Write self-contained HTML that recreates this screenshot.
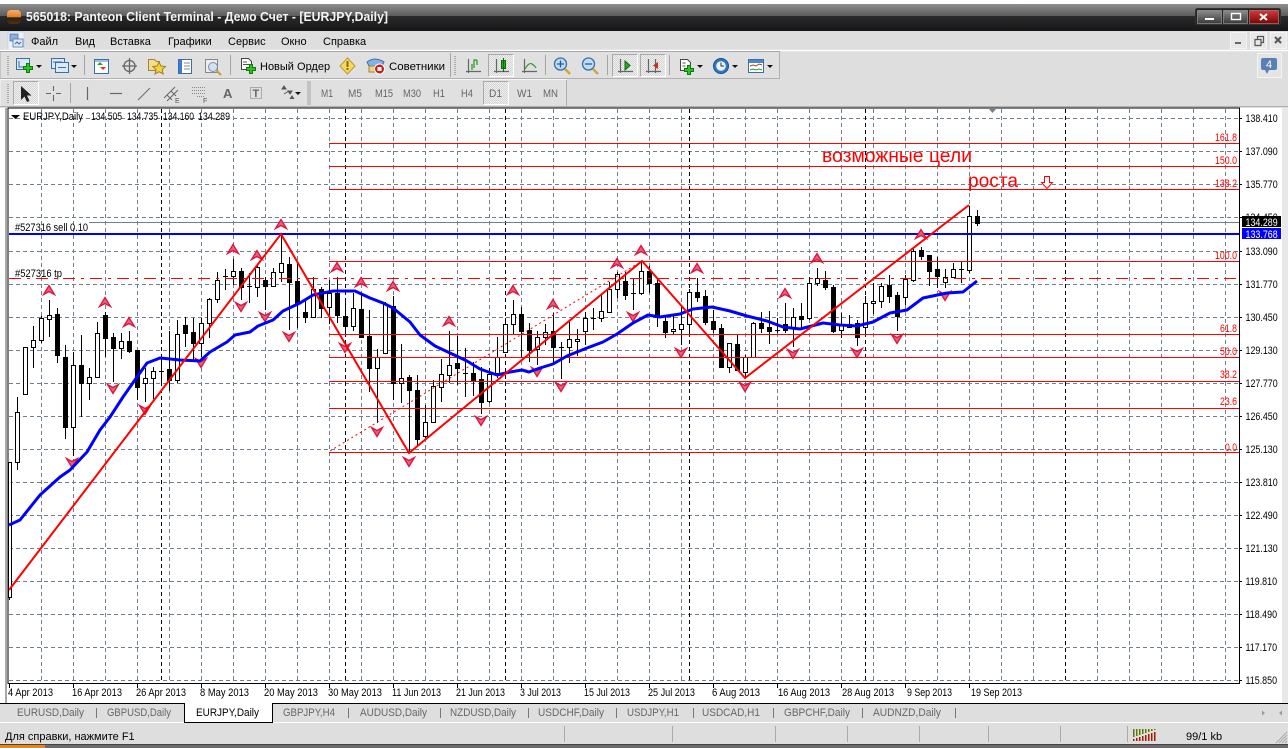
<!DOCTYPE html>
<html><head><meta charset="utf-8"><title>Panteon Client Terminal</title>
<style>html,body{margin:0;padding:0;background:#fff;width:1288px;height:748px;overflow:hidden}svg{display:block}text{font-family:"Liberation Sans","Noto Sans CJK SC",sans-serif;font-size:11px;fill:#000}</style></head><body>
<svg width="1288" height="748" viewBox="0 0 1288 748" xmlns="http://www.w3.org/2000/svg">
<defs>
<linearGradient id="tg" x1="0" y1="0" x2="0" y2="1"><stop offset="0" stop-color="#8e8e8e"/><stop offset="1" stop-color="#5c5c5c"/></linearGradient>
<linearGradient id="tb" x1="0" y1="0" x2="0" y2="1"><stop offset="0" stop-color="#2b2b2d"/><stop offset="1" stop-color="#161617"/></linearGradient>
<linearGradient id="or" x1="0" y1="0" x2="0" y2="1"><stop offset="0" stop-color="#f7b070"/><stop offset=".5" stop-color="#e87a1a"/><stop offset=".55" stop-color="#222"/><stop offset="1" stop-color="#553010"/></linearGradient>
<linearGradient id="rb" x1="0" y1="0" x2="0" y2="1"><stop offset="0" stop-color="#d23a3a"/><stop offset="1" stop-color="#7a0606"/></linearGradient>
<linearGradient id="gb" x1="0" y1="0" x2="0" y2="1"><stop offset="0" stop-color="#8c8c8c"/><stop offset="1" stop-color="#3a3a3a"/></linearGradient>
<pattern id="dt" width="2" height="2" patternUnits="userSpaceOnUse"><rect width="2" height="2" fill="#f0f0f0"/><rect width="1" height="1" fill="#d4d4d4"/><rect x="1" y="1" width="1" height="1" fill="#d4d4d4"/></pattern>
</defs>
<rect width="1288" height="748" fill="#dedede"/>
<!-- title bar -->
<rect width="1288" height="4" fill="#fff"/>
<rect y="4" width="1288" height="12" fill="url(#tg)"/>
<rect y="16" width="1288" height="15" fill="url(#tb)"/>
<rect x="7" y="10" width="14" height="14" rx="4" fill="url(#or)"/>
<text x="26" y="21" style="font-weight:bold;font-size:13px;fill:#f4f4f4" textLength="362" lengthAdjust="spacingAndGlyphs">565018: Panteon Client Terminal - Демо Счет - [EURJPY,Daily]</text>
<rect x="1195.500" y="8.500" width="85" height="16" rx="2" fill="#222" stroke="#333"/>
<rect x="1197.500" y="10.500" width="24" height="13" fill="url(#gb)" stroke="#aaa" stroke-opacity=".6"/>
<rect x="1223.500" y="10.500" width="24" height="13" fill="url(#gb)" stroke="#aaa" stroke-opacity=".6"/>
<rect x="1249.500" y="10.500" width="29" height="13" fill="url(#rb)" stroke="#c88" stroke-opacity=".6"/>
<rect x="1205" y="18" width="9" height="2" fill="#fff"/>
<rect x="1231.500" y="13.500" width="9" height="6" fill="none" stroke="#fff" stroke-width="1.400"/>
<path d="M1260 14l7 6M1267 14l-7 6" stroke="#fff" stroke-width="2"/>
<!-- menu -->
<rect x="8" y="32" width="16" height="18" fill="#eef3fb" stroke="#c8d4e6"/>
<rect x="10" y="34" width="8" height="7" fill="#8fb0dd" stroke="#44689c" stroke-width=".7"/>
<rect x="13" y="39" width="10" height="8" fill="#dce8f8" stroke="#44689c" stroke-width=".7"/>
<path d="M15 44l2-2 2 2 2-2" stroke="#44689c" fill="none"/>
<g style="fill:#222">
<text x="31" y="45">Файл</text><text x="75" y="45">Вид</text><text x="110" y="45">Вставка</text><text x="168" y="45">Графики</text><text x="228" y="45">Сервис</text><text x="281" y="45">Окно</text><text x="323" y="45">Справка</text>
</g>
<rect x="1230.500" y="32.500" width="16" height="16" fill="#e8e8e8" stroke="#f4f4f4"/><rect x="1250.500" y="32.500" width="16" height="16" fill="#e8e8e8" stroke="#f4f4f4"/><rect x="1270.500" y="32.500" width="16" height="16" fill="#e8e8e8" stroke="#f4f4f4"/>
<rect x="1235" y="42" width="6" height="2" fill="#666"/>
<path d="M1255 39.500h6v6h-6zM1257.500 39V36.500h6v6H1261" fill="none" stroke="#555" stroke-width="1.200"/>
<path d="M1275 37l6 6M1281 37l-6 6" stroke="#555" stroke-width="2"/>
<!-- toolbars -->
<path d="M0 50.500H1288" stroke="#fff" stroke-width="1.400"/>
<rect x="0" y="51.500" width="779.500" height="27" fill="#e0e0e0" stroke="#a8a8a8"/>
<rect x="0" y="79.500" width="566.500" height="27" fill="#e0e0e0" stroke="#f6f6f6"/>
<path d="M0 78.500H779.500V52M0 106.500H1288M566.500 80V106" stroke="#b0b0b0" fill="none"/>
<path d="M7.500 56v19M8.500 56v19M7.500 84v19M8.500 84v19" stroke="#aaa" stroke-dasharray="1 1"/>
<!-- separators -->
<path d="M84.500 55v20M230.500 55v20M450.500 53v24M545.500 55v20M607.500 55v20M669.500 55v20M70.500 83v20M308 81v24M310 81v24" stroke="#a4a4a4"/>
<path d="M454.500 56v19M455.500 56v19" stroke="#aaa" stroke-dasharray="1 1"/>
<!-- toolbar 1 icons -->
<g>
<rect x="16.500" y="58.500" width="13" height="11" fill="#dbe8f7" stroke="#3a6ea5"/><path d="M19 61v6h8" stroke="#3a6ea5" fill="none"/>
<path d="M26.500 63.500h3v3h3v3h-3v3h-3v-3h-3v-3h3z" fill="#2ec02e" stroke="#0b7d0b"/>
<path d="M36 65h6l-3 3z" fill="#111"/>
<rect x="51.500" y="58.500" width="13" height="10" fill="#dbe8f7" stroke="#3a6ea5"/><rect x="55.500" y="62.500" width="13" height="10" fill="#dbe8f7" stroke="#3a6ea5"/><path d="M58 67.500h8M53 62h9" stroke="#3a6ea5"/>
<path d="M71 65h6l-3 3z" fill="#111"/>
<rect x="94.500" y="59.500" width="14" height="14" fill="#fff" stroke="#3a6ea5"/><path d="M100 62l3 3h-6z" fill="#2ba02b"/><path d="M103 70l-3-3h6z" fill="#d83a1a"/><rect x="95" y="60" width="13" height="2" fill="#9cc0e8"/>
<circle cx="129.500" cy="66" r="5.500" fill="none" stroke="#666" stroke-width="1.300"/><path d="M129.500 58v16M122 66h15" stroke="#666" stroke-width="1.300"/>
<path d="M148.500 59.500h6l2 2h3v9h-11z" fill="#f6dd8a" stroke="#9a8448"/><path d="M159 62l2 4 4.500.500-3.300 3 1 4.500-4.200-2.300-4 2.300 1-4.500-3.200-3 4.400-.500z" fill="#f7d23c" stroke="#a08020"/>
<rect x="178.500" y="59.500" width="13" height="14" fill="#fff" stroke="#3a6ea5"/><rect x="179" y="60" width="3" height="13" fill="#3a7ed0"/><path d="M184 63h6M184 66h6M184 69h6" stroke="#888"/>
<rect x="205.500" y="59.500" width="12" height="13" fill="#eee" stroke="#888"/><circle cx="213" cy="67" r="4.500" fill="#cfe1f5" stroke="#7a8ea8"/><path d="M216 70l5 5" stroke="#c8a040" stroke-width="2.200"/>
<path d="M241.500 58.500h7l3 3v8h-10z" fill="#fff" stroke="#444"/><path d="M243 62h4M243 64.500h6" stroke="#555"/>
<path d="M249.500 64.500h3v3h3v3h-3v3h-3v-3h-3v-3h3z" fill="#2ec02e" stroke="#0b7d0b"/>
<text x="260" y="70">Новый Ордер</text>
<path d="M347.500 58l7.500 8-7.500 8-7.500-8z" fill="#f6d860" stroke="#b89a30"/><rect x="346.500" y="61" width="2" height="6" fill="#8a6a10"/><rect x="346.500" y="68" width="2" height="2" fill="#8a6a10"/>
<path d="M367 62q8-6 17 0l-2 4h-13z" fill="#7fb3e8" stroke="#3a6ea5"/><path d="M369 66h13v6h-13z" fill="#f0d27c" stroke="#a08040"/><circle cx="379.500" cy="69" r="5" fill="#c81e14" stroke="#fff"/><rect x="377.500" y="67" width="4" height="4" fill="#fff"/>
<text x="389" y="70" textLength="56" lengthAdjust="spacingAndGlyphs">Советники</text>
<path d="M468.500 59v14M466 71.500h15" stroke="#666" stroke-width="1.200"/><path d="M472 64v6M474 68v-8h3M477 60v5" stroke="#1a9a1a" fill="none" stroke-width="1.200"/>
<rect x="488.500" y="54.500" width="25" height="22" fill="url(#dt)" stroke="#fff"/><path d="M488.500 76.500V54.500H513.500" stroke="#aaa" fill="none"/>
<path d="M496.500 59v14M494 71.500h15" stroke="#666" stroke-width="1.200"/><rect x="501.500" y="60.500" width="4" height="8" fill="#19b019" stroke="#0a6a0a"/><path d="M503.500 58v14" stroke="#0a6a0a"/>
<path d="M524.500 59v14M522 71.500h15" stroke="#666" stroke-width="1.200"/><path d="M525 69q4-7 7-5t4 4" stroke="#2a9a2a" fill="none" stroke-width="1.200"/>
<circle cx="560.500" cy="64" r="6" fill="#bcdcf8" stroke="#3a6ea5" stroke-width="1.300"/><path d="M557 64h7M560.500 60.500v7" stroke="#2a5a98" stroke-width="1.300"/><path d="M565 69l5 5" stroke="#d2a63a" stroke-width="2.500"/>
<circle cx="588.500" cy="64" r="6" fill="#bcdcf8" stroke="#3a6ea5" stroke-width="1.300"/><path d="M585 64h7" stroke="#2a5a98" stroke-width="1.300"/><path d="M593 69l5 5" stroke="#d2a63a" stroke-width="2.500"/>
<rect x="612.500" y="54.500" width="25" height="22" fill="url(#dt)" stroke="#fff"/><path d="M612.500 76.500V54.500H637.500" stroke="#aaa" fill="none"/>
<path d="M620.500 59v14M618 71.500h15" stroke="#666" stroke-width="1.200"/><path d="M625 61l5 4.500-5 4.500z" fill="#1fae1f" stroke="#0a6a0a"/>
<rect x="640.500" y="54.500" width="25" height="22" fill="url(#dt)" stroke="#fff"/><path d="M640.500 76.500V54.500H665.500" stroke="#aaa" fill="none"/>
<path d="M648.500 59v14M646 71.500h15M655.500 59v14" stroke="#666" stroke-width="1.200"/><path d="M658 62l-5 3.500 5 3.500z" fill="#c8301a"/>
<path d="M680.500 59.500h7l3 3v8h-10z" fill="#fff" stroke="#444"/><path d="M682.500 63h3M682.500 66h3" stroke="#555"/>
<path d="M687.500 65.500h3v3h3v3h-3v3h-3v-3h-3v-3h3z" fill="#2ec02e" stroke="#0b7d0b"/>
<path d="M697 65h6l-3 3z" fill="#111"/>
<circle cx="721" cy="66" r="7.500" fill="#2a78cc" stroke="#164c8c"/><circle cx="721" cy="66" r="4.800" fill="#f2f2f2"/><path d="M721 62.500V66h3" stroke="#333" fill="none"/>
<path d="M732 65h6l-3 3z" fill="#111"/>
<rect x="748.500" y="59.500" width="15" height="13" fill="#fff" stroke="#3a6ea5"/><rect x="749" y="60" width="14" height="3" fill="#4a86d0"/><path d="M750 66l3-1 3 1 3-2 3 1" stroke="#b03a2a" fill="none"/><path d="M750 70l3-1 3 1 3-1 3 1" stroke="#2a9a2a" fill="none"/>
<path d="M767 65h6l-3 3z" fill="#111"/>
<rect x="1257.500" y="53.500" width="24" height="24" fill="#e4e4e4" stroke="#f4f4f4"/><rect x="1261" y="58" width="16" height="12" rx="2" fill="#5b7fb5"/><path d="M1265 70l2 4 2-4z" fill="#5b7fb5"/>
<text x="1266" y="68" style="fill:#fff;font-size:11px">4</text>
</g>
<!-- toolbar 2 -->
<g>
<rect x="13.500" y="81.500" width="25" height="23" fill="url(#dt)" stroke="#fff"/><path d="M13.500 104.500V81.500H38.500" stroke="#aaa" fill="none"/>
<path d="M21 86v14l3.500-3.500 2.500 5.500 2.500-1-2.500-5.500h4.500z" fill="#222"/>
<path d="M53.500 86v5M53.500 95v6M46 93.500h5M56 93.500h5" stroke="#666" stroke-width="1.100"/>
<path d="M87.500 87v13" stroke="#666" stroke-width="1.200"/>
<path d="M110 93.500h12" stroke="#666" stroke-width="1.200"/>
<path d="M138 100l12-12" stroke="#777" stroke-width="1.200"/>
<path d="M164 98l11-11M167 101l11-11M167 95l5 5M171 91l5 5" stroke="#666"/><text x="175" y="103" style="font-size:7px;fill:#555">E</text>
<path d="M192 87.500h13M192 90.500h13M192 93.500h13M197 96.500h8" stroke="#888" stroke-dasharray="1 1"/><text x="203" y="103" style="font-size:7px;fill:#555">F</text>
<text x="223" y="98" style="font-size:13px;font-weight:bold;fill:#666">A</text>
<rect x="250.500" y="87.500" width="11" height="11" fill="none" stroke="#777" stroke-dasharray="1 1"/><text x="252.500" y="97" style="font-size:11px;font-weight:bold;fill:#666">T</text>
<path d="M282 89l2-3 2 3zM284 94l5-3M288 91l2 3 2-3zM290 99l2-3 2 3" fill="#555" stroke="#555"/><path d="M295 92h6l-3 3z" fill="#111"/>
<g style="fill:#666"><text style="fill:#666" x="321" y="97" textLength="12" lengthAdjust="spacingAndGlyphs">M1</text><text style="fill:#666" x="348" y="97" textLength="14" lengthAdjust="spacingAndGlyphs">M5</text><text style="fill:#666" x="375" y="97" textLength="18" lengthAdjust="spacingAndGlyphs">M15</text><text style="fill:#666" x="403" y="97" textLength="18" lengthAdjust="spacingAndGlyphs">M30</text><text style="fill:#666" x="433" y="97" textLength="12" lengthAdjust="spacingAndGlyphs">H1</text><text style="fill:#666" x="461" y="97" textLength="12" lengthAdjust="spacingAndGlyphs">H4</text></g>
<rect x="483.500" y="81.500" width="25" height="23" fill="url(#dt)" stroke="#fff"/><path d="M483.500 104.500V81.500H508.500" stroke="#aaa" fill="none"/>
<g><text style="fill:#666" x="489" y="97" textLength="13" lengthAdjust="spacingAndGlyphs">D1</text><text style="fill:#666" x="517" y="97" textLength="15" lengthAdjust="spacingAndGlyphs">W1</text><text style="fill:#666" x="543" y="97" textLength="15" lengthAdjust="spacingAndGlyphs">MN</text></g>
</g>
<!-- chart -->
<rect x="0" y="108" width="1282" height="595" fill="#fff"/>
<rect x="5" y="108" width="2" height="596" fill="#a8a8a8"/>
<rect x="1282" y="108" width="6" height="595" fill="#e8e8e8"/>
<g fill="none" shape-rendering="crispEdges">
<path stroke="#708090" stroke-dasharray="4 3" d="M9 118.500H1239M9 151.500H1239M9 184.500H1239M9 217.500H1239M9 251.500H1239M9 284.500H1239M9 317.500H1239M9 350.500H1239M9 383.500H1239M9 416.500H1239M9 449.500H1239M9 482.500H1239M9 515.500H1239M9 548.500H1239M9 581.500H1239M9 614.500H1239M9 647.500H1239M9 680.500H1239"/>
<path stroke="#708090" stroke-dasharray="4 3" d="M41.500 109V683M73.500 109V683M105.500 109V683M137.500 109V683M169.500 109V683M201.500 109V683M233.500 109V683M265.500 109V683M297.500 109V683M329.500 109V683M361.500 109V683M393.500 109V683M425.500 109V683M457.500 109V683M489.500 109V683M521.500 109V683M553.500 109V683M585.500 109V683M617.500 109V683M649.500 109V683M681.500 109V683M713.500 109V683M745.500 109V683M777.500 109V683M809.500 109V683M841.500 109V683M873.500 109V683M905.500 109V683M937.500 109V683M969.500 109V683M1001.500 109V683M1033.500 109V683M1097.500 109V683M1129.500 109V683M1161.500 109V683M1193.500 109V683M1225.500 109V683"/>
<path stroke="#000" stroke-dasharray="4 3" d="M161.500 109V683M345.500 109V683M505.500 109V683M689.500 109V683M865.500 109V683M1065.500 109V683"/>
<path stroke="#708090" d="M89 222.500H1239"/>
</g>
<!-- candle wicks -->
<path shape-rendering="crispEdges" stroke="#000" fill="none" d="M9.500 462V600M17.500 397V470M25.500 347V394M33.500 326V368M41.500 316V343M49.500 300V337M57.500 308V363M65.500 345V439M73.500 352V456M81.500 335V417M89.500 368V400M97.500 322V377M105.500 312V357M113.500 333V382M121.500 333V359M129.500 331V353M137.500 350V400M145.500 368V402M153.500 367V399M161.500 358V383M169.500 331V391M177.500 320V383M185.500 317V347M193.500 318V360M201.500 318V357M209.500 298V338M217.500 272V303M225.500 269V290M233.500 259V285M241.500 268V300M249.500 273V303M257.500 265V297M265.500 277V310M273.500 268V287M281.500 235V282M289.500 257V330M297.500 263V328M305.500 300V323M313.500 277V317M321.500 287V318M329.500 280V324M337.500 277V323M345.500 301V335M353.500 293V331M361.500 295V338M369.500 310V392M377.500 349V423M385.500 302V353M393.500 296V400M401.500 344V403M409.500 375V453M417.500 375V445M425.500 405V438M433.500 380V422M441.500 359V402M449.500 331V383M457.500 336V385M465.500 348V397M473.500 362V396M481.500 367V414M489.500 368V403M497.500 337V378M505.500 318V353M513.500 300V335M521.500 307V358M529.500 323V362M537.500 331V365M545.500 324V345M553.500 313V363M561.500 342V379M569.500 322V363M577.500 329V356M585.500 312V345M593.500 308V330M601.500 295V322M609.500 282V313M617.500 272V298M625.500 272V300M633.500 278V310M641.500 261V295M649.500 266V293M657.500 278V327M665.500 315V338M673.500 315V334M681.500 305V345M689.500 289V333M697.500 278V302M705.500 290V325M713.500 310V333M721.500 324V368M729.500 343V373M737.500 335V370M745.500 355V377M753.500 322V358M761.500 312V333M769.500 311V344M777.500 318V333M785.500 303V333M793.500 308V347M801.500 303V330M809.500 277V320M817.500 268V286M825.500 271V290M833.500 285V333M841.500 313V338M849.500 315V328M857.500 320V346M865.500 296V333M873.500 283V314M881.500 283V308M889.500 275V303M897.500 292V331M905.500 275V305M913.500 247V282M921.500 247V260M929.500 255V286M937.500 257V288M945.500 269V288M953.500 263V278M961.500 262V283M969.500 206V273M977.500 210V226M159 371.500h5M223 276.500h5M247 286.500h5M463 373.500h5M559 347.500h5M591 318.500h5M631 293.500h5M775 330.500h5M959 269.500h5"/>
<!-- white bodies -->
<path shape-rendering="crispEdges" fill="#fff" stroke="#000" d="M8.500 462.500h3v135h-3zM15.500 412.500h4v50h-4zM23.500 347.500h4v47h-4zM31.500 340.500h4v7h-4zM39.500 318.500h4v22h-4zM47.500 315.500h4v4h-4zM71.500 365.500h4v62h-4zM87.500 377.500h4v6h-4zM95.500 333.500h4v44h-4zM119.500 341.500h4v7h-4zM143.500 378.500h4v5h-4zM151.500 371.500h4v7h-4zM175.500 334.500h4v46h-4zM199.500 323.500h4v20h-4zM207.500 299.500h4v24h-4zM215.500 280.500h4v19h-4zM231.500 271.500h4v5h-4zM255.500 267.500h4v20h-4zM271.500 272.500h4v14h-4zM279.500 263.500h4v9h-4zM311.500 289.500h4v28h-4zM327.500 293.500h4v14h-4zM351.500 308.500h4v18h-4zM375.500 357.500h4v11h-4zM383.500 304.500h4v49h-4zM399.500 378.500h4v5h-4zM423.500 422.500h4v14h-4zM431.500 386.500h4v36h-4zM439.500 374.500h4v13h-4zM447.500 365.500h4v10h-4zM487.500 374.500h4v27h-4zM495.500 357.500h4v16h-4zM503.500 324.500h4v28h-4zM511.500 314.500h4v10h-4zM535.500 337.500h4v12h-4zM543.500 332.500h4v5h-4zM567.500 339.500h4v8h-4zM575.500 339.500h4v2h-4zM583.500 318.500h4v13h-4zM599.500 311.500h4v7h-4zM607.500 289.500h4v23h-4zM615.500 274.500h4v15h-4zM639.500 271.500h4v22h-4zM671.500 329.500h4v2h-4zM679.500 324.500h4v5h-4zM687.500 292.500h4v32h-4zM727.500 343.500h4v24h-4zM743.500 357.500h4v15h-4zM751.500 323.500h4v34h-4zM791.500 317.500h4v11h-4zM807.500 283.500h4v35h-4zM815.500 278.500h4v5h-4zM839.500 324.500h4v6h-4zM863.500 303.500h4v24h-4zM871.500 301.500h4v2h-4zM879.500 286.500h4v15h-4zM903.500 279.500h4v18h-4zM911.500 251.500h4v29h-4zM943.500 277.500h4v5h-4zM951.500 269.500h4v8h-4zM967.500 216.500h4v54h-4z"/>
<!-- black bodies -->
<path shape-rendering="crispEdges" fill="#000" stroke="#000" d="M55.500 314.500h4v41h-4zM63.500 357.500h4v70h-4zM79.500 365.500h4v18h-4zM103.500 315.500h4v23h-4zM111.500 337.500h4v11h-4zM127.500 341.500h4v10h-4zM135.500 350.500h4v37h-4zM167.500 369.500h4v11h-4zM183.500 325.500h4v8h-4zM191.500 332.500h4v11h-4zM239.500 271.500h4v16h-4zM263.500 280.500h4v6h-4zM287.500 264.500h4v18h-4zM295.500 281.500h4v22h-4zM303.500 312.500h4v5h-4zM319.500 289.500h4v19h-4zM335.500 293.500h4v22h-4zM343.500 316.500h4v10h-4zM359.500 309.500h4v28h-4zM367.500 336.500h4v32h-4zM391.500 306.500h4v77h-4zM407.500 377.500h4v13h-4zM415.500 390.500h4v49h-4zM455.500 363.500h4v5h-4zM471.500 373.500h4v7h-4zM479.500 379.500h4v23h-4zM519.500 314.500h4v17h-4zM527.500 330.500h4v20h-4zM551.500 331.500h4v16h-4zM623.500 281.500h4v14h-4zM647.500 271.500h4v12h-4zM655.500 283.500h4v34h-4zM663.500 321.500h4v11h-4zM695.500 292.500h4v5h-4zM703.500 296.500h4v26h-4zM711.500 321.500h4v8h-4zM719.500 328.500h4v39h-4zM735.500 344.500h4v26h-4zM759.500 323.500h4v5h-4zM767.500 327.500h4v4h-4zM783.500 324.500h4v6h-4zM799.500 316.500h4v3h-4zM823.500 280.500h4v7h-4zM831.500 287.500h4v44h-4zM847.500 324.500h4v3h-4zM855.500 323.500h4v14h-4zM887.500 285.500h4v11h-4zM895.500 295.500h4v21h-4zM919.500 250.500h4v6h-4zM927.500 255.500h4v16h-4zM935.500 269.500h4v7h-4zM975.500 216.500h4v7h-4z"/>
<!-- fibo -->
<path shape-rendering="crispEdges" stroke="#f00" fill="none" d="M329 143.500H1239M329 166.500H1239M329 189.500H1239M329 261.500H1239M329 334.500H1239M329 357.500H1239M329 381.500H1239M329 408.500H1239M329 452.500H1239"/>
<path stroke="#f00" fill="none" stroke-dasharray="2 3" d="M330 451L642 261"/>
<path shape-rendering="crispEdges" stroke="#f00" fill="none" stroke-dasharray="12 6 3 6" d="M9 278.500H1239"/>
<!-- order line -->
<path shape-rendering="crispEdges" stroke="#00f" stroke-width="2" d="M9 234H1239"/>
<!-- fractal arrows -->
<path fill="#e8607c" stroke="#dc143c" stroke-width="1.300" stroke-linejoin="miter" d="M49 285.500l5.500 9-5.500-3-5.500 3zM105 297.500l5.500 9-5.500-3-5.500 3zM129 317.500l5.500 9-5.500-3-5.500 3zM233 244.500l5.500 9-5.500-3-5.500 3zM257 250.500l5.500 9-5.500-3-5.500 3zM281 219.500l5.500 9-5.500-3-5.500 3zM337 262.500l5.500 9-5.500-3-5.500 3zM361 277.500l5.500 9-5.500-3-5.500 3zM393 281.500l5.500 9-5.500-3-5.500 3zM449 316.500l5.500 9-5.500-3-5.500 3zM513 285.500l5.500 9-5.500-3-5.500 3zM553 299.500l5.500 9-5.500-3-5.500 3zM617 258.500l5.500 9-5.500-3-5.500 3zM641 245.500l5.500 9-5.500-3-5.500 3zM697 263.500l5.500 9-5.500-3-5.500 3zM785 288.500l5.500 9-5.500-3-5.500 3zM817 253.500l5.500 9-5.500-3-5.500 3zM921 229.500l5.500 9-5.500-3-5.500 3zM72 467.500l5.500-9-5.500 3-5.500-3zM113 393.500l5.500-9-5.500 3-5.500-3zM145 414.500l5.500-9-5.500 3-5.500-3zM201 367.500l5.500-9-5.500 3-5.500-3zM241 311.500l5.500-9-5.500 3-5.500-3zM265 321.500l5.500-9-5.500 3-5.500-3zM289 341.500l5.500-9-5.500 3-5.500-3zM345 352.500l5.500-9-5.500 3-5.500-3zM377 436.500l5.500-9-5.500 3-5.500-3zM409 466.500l5.500-9-5.500 3-5.500-3zM481 425.500l5.500-9-5.500 3-5.500-3zM537 376.500l5.500-9-5.500 3-5.500-3zM561 391.500l5.500-9-5.500 3-5.500-3zM633 321.500l5.500-9-5.500 3-5.500-3zM681 357.500l5.500-9-5.500 3-5.500-3zM745 391.500l5.500-9-5.500 3-5.500-3zM793 358.500l5.500-9-5.500 3-5.500-3zM857 357.500l5.500-9-5.500 3-5.500-3zM897 343.500l5.500-9-5.500 3-5.500-3zM945 300.500l5.500-9-5.500 3-5.500-3z"/>
<!-- MA -->
<path fill="none" stroke="#00f" stroke-width="3" stroke-linejoin="round" d="M9 525L20 520 40 495 60 477 70 470 87 452 100 430 110 417 123 397 137 377 147 363 160 358 180 360 200 361 210 352 227 342 235 335 250 332 258 326 273 320 283 311 300 303 313 295 333 291 355 291 370 298 383 303 393 308 410 322 420 335 435 346 450 353 467 361 480 369 497 375 510 372 522 370 529 372 540 368 553 364 567 356 587 348 603 342 617 334 633 323 648 315 660 317 680 314 693 309 712 307 730 311 747 316 767 321 783 327 800 329 823 323 840 325 857 326 873 322 890 313 907 310 923 298 947 293 963 292 977 281"/>
<!-- zigzag -->
<path fill="none" stroke="#f00" stroke-width="2" d="M9 590L281 234 409 453 642 261 745 378 969 205"/>
<rect x="8" y="108" width="1231.500" height="575.500" fill="none" stroke="#000" shape-rendering="crispEdges"/>
<path d="M989 109h7l-3.500 4z" fill="#708090"/>
<!-- chart text -->
<path d="M11 115h9l-4.500 4z" fill="#000"/>
<text x="23" y="120" textLength="60" lengthAdjust="spacingAndGlyphs">EURJPY,Daily</text>
<text x="91" y="120" textLength="31" lengthAdjust="spacingAndGlyphs">134.505</text><text x="127" y="120" textLength="31" lengthAdjust="spacingAndGlyphs">134.735</text><text x="163" y="120" textLength="31" lengthAdjust="spacingAndGlyphs">134.160</text><text x="198" y="120" textLength="32" lengthAdjust="spacingAndGlyphs">134.289</text>
<text x="15" y="231" textLength="73" lengthAdjust="spacingAndGlyphs">#527316 sell 0.10</text>
<text x="15" y="277" textLength="47" lengthAdjust="spacingAndGlyphs">#527316 tp</text>
<text x="822" y="162" style="fill:#f00;font-size:19.500px" textLength="150" lengthAdjust="spacingAndGlyphs">возможные цели</text>
<text x="968" y="187" style="fill:#f00;font-size:19.500px" textLength="50" lengthAdjust="spacingAndGlyphs">роста</text>
<path d="M1044.500 176.500h5v6h3l-5.500 6-5.500-6h3z" fill="#fff" stroke="#f00"/>
<g style="font-size:11px"><text x="1215" y="141" style="fill:#f00" textLength="22" lengthAdjust="spacingAndGlyphs">161.8</text><text x="1215" y="164" style="fill:#f00" textLength="22" lengthAdjust="spacingAndGlyphs">150.0</text><text x="1215" y="187" style="fill:#f00" textLength="22" lengthAdjust="spacingAndGlyphs">138.2</text><text x="1215" y="259" style="fill:#f00" textLength="22" lengthAdjust="spacingAndGlyphs">100.0</text><text x="1220" y="332" style="fill:#f00" textLength="17" lengthAdjust="spacingAndGlyphs">61.8</text><text x="1220" y="355" style="fill:#f00" textLength="17" lengthAdjust="spacingAndGlyphs">50.0</text><text x="1220" y="378" style="fill:#f00" textLength="17" lengthAdjust="spacingAndGlyphs">38.2</text><text x="1220" y="405" style="fill:#f00" textLength="17" lengthAdjust="spacingAndGlyphs">23.6</text><text x="1225" y="451" style="fill:#f00" textLength="12" lengthAdjust="spacingAndGlyphs">0.0</text></g>
<!-- price axis -->
<path shape-rendering="crispEdges" stroke="#000" d="M1239 118.500h3M1239 151.500h3M1239 184.500h3M1239 217.500h3M1239 251.500h3M1239 284.500h3M1239 317.500h3M1239 350.500h3M1239 383.500h3M1239 416.500h3M1239 449.500h3M1239 482.500h3M1239 515.500h3M1239 548.500h3M1239 581.500h3M1239 614.500h3M1239 647.500h3M1239 680.500h3"/>
<g transform="translate(1245.500 0) scale(.81 1)"><text x="0" y="122">138.410</text><text x="0" y="155">137.090</text><text x="0" y="188">135.770</text><text x="0" y="221">134.450</text><text x="0" y="255">133.090</text><text x="0" y="288">131.770</text><text x="0" y="321">130.450</text><text x="0" y="354">129.130</text><text x="0" y="387">127.770</text><text x="0" y="420">126.450</text><text x="0" y="453">125.130</text><text x="0" y="486">123.810</text><text x="0" y="519">122.490</text><text x="0" y="552">121.130</text><text x="0" y="585">119.810</text><text x="0" y="618">118.490</text><text x="0" y="651">117.170</text><text x="0" y="684">115.850</text></g>
<rect x="1242" y="216" width="39" height="11" fill="#000"/><rect x="1242" y="228" width="39" height="11" fill="#00f"/>
<g transform="translate(1245.500 0) scale(.81 1)"><text x="0" y="226" style="fill:#fff">134.289</text><text x="0" y="238" style="fill:#fff">133.768</text></g>
<!-- time axis -->
<path shape-rendering="crispEdges" stroke="#000" d="M9.500 684v4M73.500 684v4M137.500 684v4M201.500 684v4M265.500 684v4M329.500 684v4M393.500 684v4M457.500 684v4M521.500 684v4M585.500 684v4M649.500 684v4M713.500 684v4M777.500 684v4M841.500 684v4M905.500 684v4M969.500 684v4"/>
<g><text x="8" y="696" textLength="45" lengthAdjust="spacingAndGlyphs">4 Apr 2013</text><text x="72" y="696" textLength="50" lengthAdjust="spacingAndGlyphs">16 Apr 2013</text><text x="136" y="696" textLength="50" lengthAdjust="spacingAndGlyphs">26 Apr 2013</text><text x="200" y="696" textLength="49" lengthAdjust="spacingAndGlyphs">8 May 2013</text><text x="264" y="696" textLength="54" lengthAdjust="spacingAndGlyphs">20 May 2013</text><text x="328" y="696" textLength="54" lengthAdjust="spacingAndGlyphs">30 May 2013</text><text x="392" y="696" textLength="49" lengthAdjust="spacingAndGlyphs">11 Jun 2013</text><text x="456" y="696" textLength="49" lengthAdjust="spacingAndGlyphs">21 Jun 2013</text><text x="520" y="696" textLength="41" lengthAdjust="spacingAndGlyphs">3 Jul 2013</text><text x="584" y="696" textLength="46" lengthAdjust="spacingAndGlyphs">15 Jul 2013</text><text x="648" y="696" textLength="47" lengthAdjust="spacingAndGlyphs">25 Jul 2013</text><text x="712" y="696" textLength="48" lengthAdjust="spacingAndGlyphs">6 Aug 2013</text><text x="778" y="696" textLength="52" lengthAdjust="spacingAndGlyphs">16 Aug 2013</text><text x="842" y="696" textLength="52" lengthAdjust="spacingAndGlyphs">28 Aug 2013</text><text x="907" y="696" textLength="45" lengthAdjust="spacingAndGlyphs">9 Sep 2013</text><text x="971" y="696" textLength="51" lengthAdjust="spacingAndGlyphs">19 Sep 2013</text></g>
<!-- tabs -->
<rect x="0" y="703" width="1288" height="20" fill="#dedede"/>
<path d="M0 703.500H1288" stroke="#000"/>
<path d="M0 722.500H1288" stroke="#fff"/>
<rect x="184.500" y="703.500" width="88" height="19" fill="#fff" stroke="#000"/>
<rect x="185" y="702" width="87" height="3" fill="#fff"/>
<path d="M96.500 708v10M348.500 708v10M440.500 708v10M528.500 708v10M616.500 708v10M693.500 708v10M773.500 708v10M862.500 708v10M955.500 708v10" stroke="#777"/>
<g><text x="17" y="716" style="fill:#666" textLength="67" lengthAdjust="spacingAndGlyphs">EURUSD,Daily</text><text x="107" y="716" style="fill:#666" textLength="64" lengthAdjust="spacingAndGlyphs">GBPUSD,Daily</text><text x="196" y="716" textLength="63" lengthAdjust="spacingAndGlyphs">EURJPY,Daily</text><text x="283" y="716" style="fill:#666" textLength="52" lengthAdjust="spacingAndGlyphs">GBPJPY,H4</text><text x="360" y="716" style="fill:#666" textLength="67" lengthAdjust="spacingAndGlyphs">AUDUSD,Daily</text><text x="450" y="716" style="fill:#666" textLength="66" lengthAdjust="spacingAndGlyphs">NZDUSD,Daily</text><text x="538" y="716" style="fill:#666" textLength="66" lengthAdjust="spacingAndGlyphs">USDCHF,Daily</text><text x="627" y="716" style="fill:#666" textLength="52" lengthAdjust="spacingAndGlyphs">USDJPY,H1</text><text x="702" y="716" style="fill:#666" textLength="58" lengthAdjust="spacingAndGlyphs">USDCAD,H1</text><text x="784" y="716" style="fill:#666" textLength="66" lengthAdjust="spacingAndGlyphs">GBPCHF,Daily</text><text x="873" y="716" style="fill:#666" textLength="68" lengthAdjust="spacingAndGlyphs">AUDNZD,Daily</text></g>
<path d="M1265 713l-3-2.500v5zM1279 713l3-2.500v5z" fill="#999"/>
<!-- status bar -->
<text x="5" y="740">Для справки, нажмите F1</text>
<path d="M564.500 726v16M672.500 726v16M775.500 726v16M847.500 726v16M919.500 726v16M988.500 726v16M1060.500 726v16M1127.500 726v16" stroke="#aaa"/>
<path d="M1133 729h1.500v8H1133zM1136 729h1.500v7H1136zM1139 729h1.500v6H1139zM1142 729h1.500v5H1142zM1145 729h1.500v4H1145zM1148 729h1.500v3H1148zM1151 729h1.500v2H1151zM1154 729h1.500v1H1154z" fill="#5a7a00"/>
<path d="M1133 739h1.500v2H1133zM1136 738h1.500v3H1136zM1139 737h1.500v4H1139zM1142 736h1.500v5H1142zM1145 735h1.500v6H1145zM1148 734h1.500v7H1148zM1151 733h1.500v8H1151zM1154 732h1.500v9H1154z" fill="#a81a00"/>
<text x="1186" y="740">99/1 kb</text>
<path d="M1276 743l11-11M1279 743l8-8M1282 743l5-5M1285 743l2-2" stroke="#aaa"/>
<rect x="0" y="744" width="1288" height="4" fill="#6c6c6c"/>
<rect x="0" y="744" width="1288" height="1" fill="#444"/>
<rect x="0" y="745" width="45" height="3" fill="#e8841a"/>
</svg>
</body></html>
